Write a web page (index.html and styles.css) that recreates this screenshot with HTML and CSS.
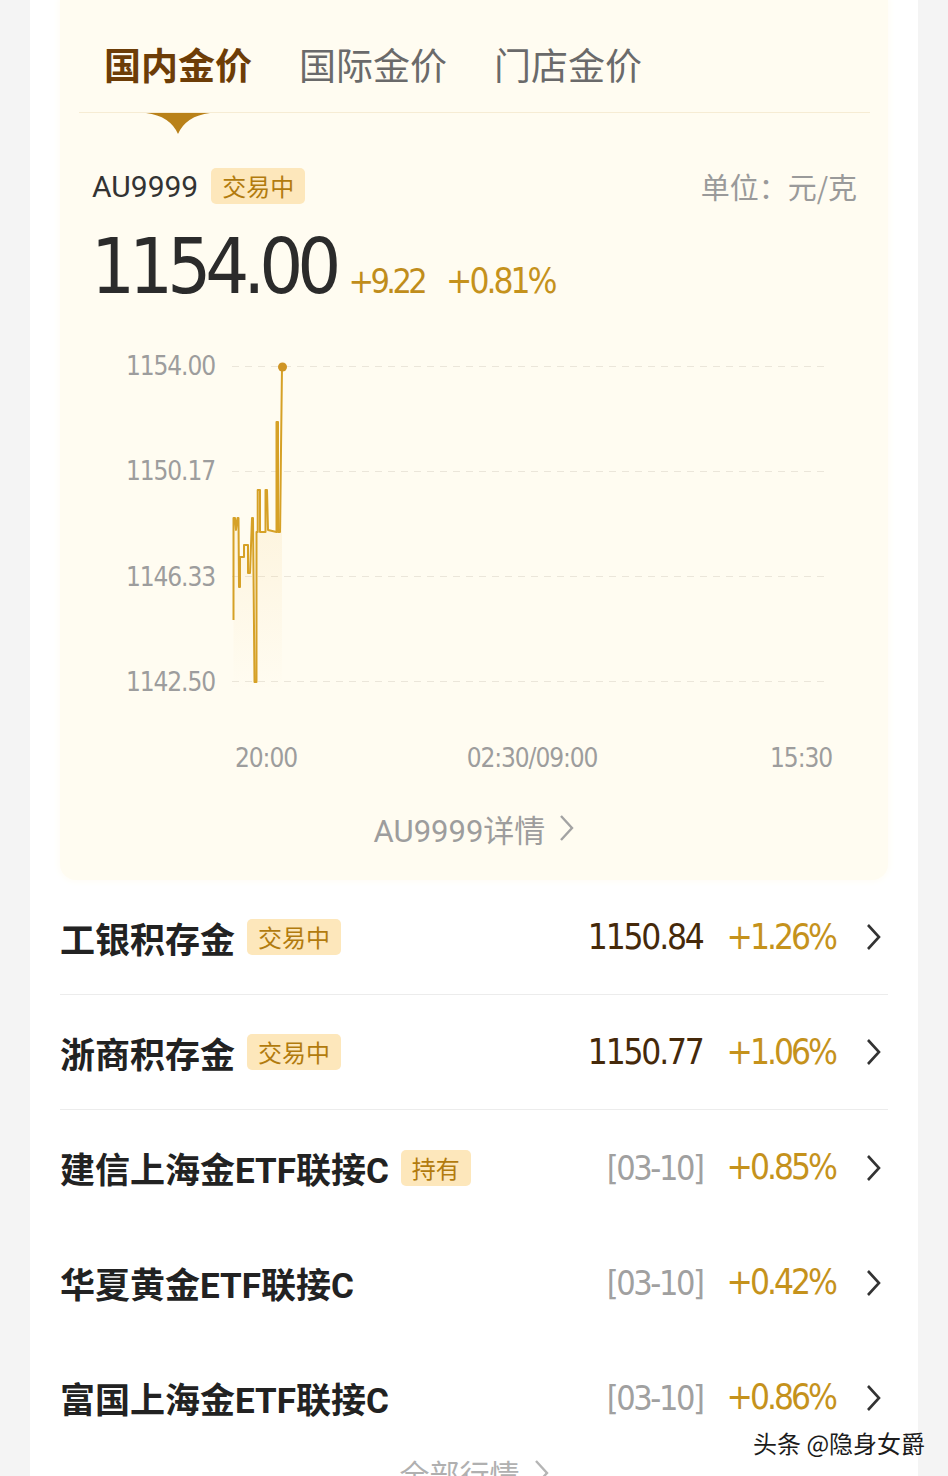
FILE: index.html
```html
<!DOCTYPE html>
<html lang="zh-CN">
<head>
<meta charset="utf-8">
<title>金价</title>
<link rel="stylesheet" href="styles.css">
</head>
<body>
<div class="page">
  <div class="card">
    <section class="panel">
      <nav class="tabs">
        <span class="tab active">国内金价<svg class="indicator" width="64" height="22" viewBox="0 0 64 22"><path d="M0 0 H64 Q40 3 32 21 Q24 3 0 0 Z" fill="#b98119"/></svg></span>
        <span class="tab">国际金价</span>
        <span class="tab">门店金价</span>
      </nav>
      <div class="tab-line"></div>
      <div class="quote-head">
        <div class="code">AU9999<span class="badge">交易中</span></div>
        <div class="unit">单位：元/克</div>
      </div>
      <div class="price-row">
        <span class="price num">1154.00</span>
        <span class="chg num">+9.22</span>
        <span class="chg pct num">+0.81%</span>
      </div>
      <svg class="chart" width="828" height="450" viewBox="60 340 828 450">
        <defs>
          <linearGradient id="fillg" gradientUnits="userSpaceOnUse" x1="0" y1="420" x2="0" y2="690">
            <stop offset="0" stop-color="#f3c36a" stop-opacity="0.22"/>
            <stop offset="1" stop-color="#f3c36a" stop-opacity="0"/>
          </linearGradient>
        </defs>
        <g stroke="#ebe6da" stroke-width="1" stroke-dasharray="7 6">
          <line x1="232" x2="830" y1="366.5" y2="366.5"/>
          <line x1="232" x2="830" y1="471.5" y2="471.5"/>
          <line x1="232" x2="830" y1="576.5" y2="576.5"/>
          <line x1="232" x2="830" y1="681.5" y2="681.5"/>
        </g>
        <g class="axis" text-anchor="end">
          <text x="215" y="375">1154.00</text>
          <text x="215" y="480">1150.17</text>
          <text x="215" y="586">1146.33</text>
          <text x="215" y="691">1142.50</text>
        </g>
        <g class="axis">
          <text x="266" y="767" text-anchor="middle">20:00</text>
          <text x="532" y="767" text-anchor="middle">02:30/09:00</text>
          <text x="832" y="767" text-anchor="end">15:30</text>
        </g>
        <path fill="url(#fillg)" d="M233.5 620 L233.5 518 L235 518 L236 530 L237.5 518 L238.5 518 L239 587 L240 587 L240 557 L244 557 L244 545 L248 545 L248 573 L250 573 L252 518 L253 518 L254.5 682 L256.5 682 L256.5 532 L257.7 532 L257.7 490 L260 490 L260 532 L265.5 532 L265.5 490 L267 490 L268 530 L276.5 532 L276.5 422 L278 422 L278 532 L280 532 L282 367 L282 690 L233.5 690 Z"/>
        <polyline fill="none" stroke="#d6a126" stroke-width="2" stroke-linejoin="round" points="233.5,620 233.5,518 235,518 236,530 237.5,518 238.5,518 239,587 240,587 240,557 244,557 244,545 248,545 248,573 250,573 252,518 253,518 254.5,682 256.5,682 256.5,532 257.7,532 257.7,490 260,490 260,532 265.5,532 265.5,490 267,490 268,530 276.5,532 276.5,422 278,422 278,532 280,532 282,367"/>
        <circle cx="282.5" cy="367" r="4.5" fill="#cf9524"/>
      </svg>
      <div class="detail">AU9999详情<svg class="chev" width="15" height="28" viewBox="0 0 15 28"><path d="M2 2 L13 14 L2 26" fill="none" stroke="#a3a3a3" stroke-width="2.4"/></svg></div>
    </section>

    <ul class="list">
      <li class="row line">
        <span class="name">工银积存金</span><span class="badge">交易中</span>
        <span class="right"><span class="val num">1150.84</span><span class="pct num">+1.26%</span><svg class="go" width="15" height="28" viewBox="0 0 15 28"><path d="M2 2 L13 14 L2 26" fill="none" stroke="#333" stroke-width="2.6"/></svg></span>
      </li>
      <li class="row line">
        <span class="name">浙商积存金</span><span class="badge">交易中</span>
        <span class="right"><span class="val num">1150.77</span><span class="pct num">+1.06%</span><svg class="go" width="15" height="28" viewBox="0 0 15 28"><path d="M2 2 L13 14 L2 26" fill="none" stroke="#333" stroke-width="2.6"/></svg></span>
      </li>
      <li class="row">
        <span class="name">建信上海金ETF联接C</span><span class="badge">持有</span>
        <span class="right"><span class="date num">[03-10]</span><span class="pct num">+0.85%</span><svg class="go" width="15" height="28" viewBox="0 0 15 28"><path d="M2 2 L13 14 L2 26" fill="none" stroke="#333" stroke-width="2.6"/></svg></span>
      </li>
      <li class="row">
        <span class="name">华夏黄金ETF联接C</span>
        <span class="right"><span class="date num">[03-10]</span><span class="pct num">+0.42%</span><svg class="go" width="15" height="28" viewBox="0 0 15 28"><path d="M2 2 L13 14 L2 26" fill="none" stroke="#333" stroke-width="2.6"/></svg></span>
      </li>
      <li class="row">
        <span class="name">富国上海金ETF联接C</span>
        <span class="right"><span class="date num">[03-10]</span><span class="pct num">+0.86%</span><svg class="go" width="15" height="28" viewBox="0 0 15 28"><path d="M2 2 L13 14 L2 26" fill="none" stroke="#333" stroke-width="2.6"/></svg></span>
      </li>
    </ul>
    <div class="more">全部行情<svg class="chev" width="15" height="28" viewBox="0 0 15 28"><path d="M2 2 L13 14 L2 26" fill="none" stroke="#b5b5b5" stroke-width="2.4"/></svg></div>
  </div>
  <div class="watermark">头条 @隐身女爵</div>
</div>
</body>
</html>
```
FILE: styles.css
```css
* { box-sizing: border-box; }
html, body { margin: 0; padding: 0; }
body {
  background: #f4f4f4;
  font-family: Roboto, "Noto Sans CJK SC", sans-serif;
  color: #333;
}
.page {
  position: relative;
  width: 948px;
  height: 1476px;
  overflow: hidden;
}
.card {
  margin: 0 30px;
  background: #fff;
  min-height: 1476px;
  padding: 0 30px;
}
.num {
  font-family: "DejaVu Sans Condensed", "DejaVu Sans", sans-serif;
}
.panel {
  background: #fffcf1;
  border-radius: 0 0 16px 16px;
  padding-bottom: 32px;
  box-shadow: 0 0 6px 2px #fffdf6;
}
.tabs {
  display: flex;
  gap: 47px;
  height: 112px;
  padding: 16px 0 0 44px;
}
.tab {
  position: relative;
  display: flex;
  align-items: center;
  font-family: "Noto Sans CJK SC", sans-serif;
  font-size: 37px;
  color: #6a6a6a;
}
.tab.active {
  color: #6d3d07;
  font-weight: 700;
}
.indicator {
  position: absolute;
  top: calc(100% + 1px);
  left: 50%;
  margin-left: -32px;
  display: block;
}
.tab-line {
  height: 1px;
  margin: 0 18px 0 19px;
  background: #f6ecd4;
}
.quote-head {
  margin-top: 55px;
  height: 36px;
  padding: 0 31px 0 32px;
  display: flex;
  align-items: center;
  justify-content: space-between;
}
.code {
  display: flex;
  align-items: center;
  gap: 13px;
  font-size: 30px;
  color: #333;
}
.badge {
  display: inline-block;
  height: 36px;
  line-height: 36px;
  padding: 0 11px;
  font-family: "Noto Sans CJK SC", sans-serif;
  font-size: 24px;
  color: #b27b0e;
  background: #fde7bb;
  border-radius: 5px;
}
.unit {
  font-family: "Noto Sans CJK SC", sans-serif;
  font-size: 29px;
  color: #9a9a9a;
}
.price-row {
  margin-top: 24px;
  height: 80px;
  padding-left: 31px;
  display: flex;
  align-items: baseline;
  line-height: 1;
}
.price {
  font-size: 77px;
  letter-spacing: -6px;
  color: #2b2b2b;
}
.chg {
  font-size: 34px;
  letter-spacing: -3.6px;
  color: #c08d1b;
  margin-left: 13px;
}
.chg.pct { margin-left: 22px; }
.chart {
  display: block;
  margin-top: 32px;
}
.axis text {
  font-family: "DejaVu Sans Condensed", "DejaVu Sans", sans-serif;
  font-size: 26px;
  letter-spacing: -1.1px;
  fill: #9d9d9d;
}
.detail {
  margin-top: 18px;
  height: 40px;
  display: flex;
  align-items: center;
  justify-content: center;
  font-size: 31px;
  color: #9d9d9d;
}
.chev { margin-left: 14px; }
.list {
  list-style: none;
  margin: 0;
  padding: 0;
}
.row {
  height: 115px;
  display: flex;
  align-items: center;
  padding-right: 7px;
}
.row.line { border-bottom: 1px solid #ececec; }
.name {
  font-size: 35px;
  font-weight: 700;
  color: #222;
}
.row .badge { margin-left: 12px; }
.right {
  margin-left: auto;
  display: flex;
  align-items: center;
  line-height: 1;
}
.val {
  font-size: 35px;
  letter-spacing: -2.2px;
  color: #45290a;
}
.date {
  font-size: 34px;
  letter-spacing: -2.4px;
  color: #a0a0a0;
}
.pct {
  font-size: 35px;
  letter-spacing: -3px;
  color: #c5921c;
  margin-left: 24px;
}
.go {
  display: block;
  margin-left: 31px;
}
.more {
  display: flex;
  justify-content: center;
  align-items: center;
  height: 40px;
  margin-top: -2px;
  font-size: 30px;
  color: #b0b0b0;
}
.watermark {
  position: absolute;
  left: 753px;
  top: 1425px;
  font-family: "Noto Sans CJK SC", sans-serif;
  font-size: 24px;
  color: #1c1c1c;
  text-shadow: 0 0 2px #fff, 0 0 2px #fff, 0 0 3px #fff;
}
```
